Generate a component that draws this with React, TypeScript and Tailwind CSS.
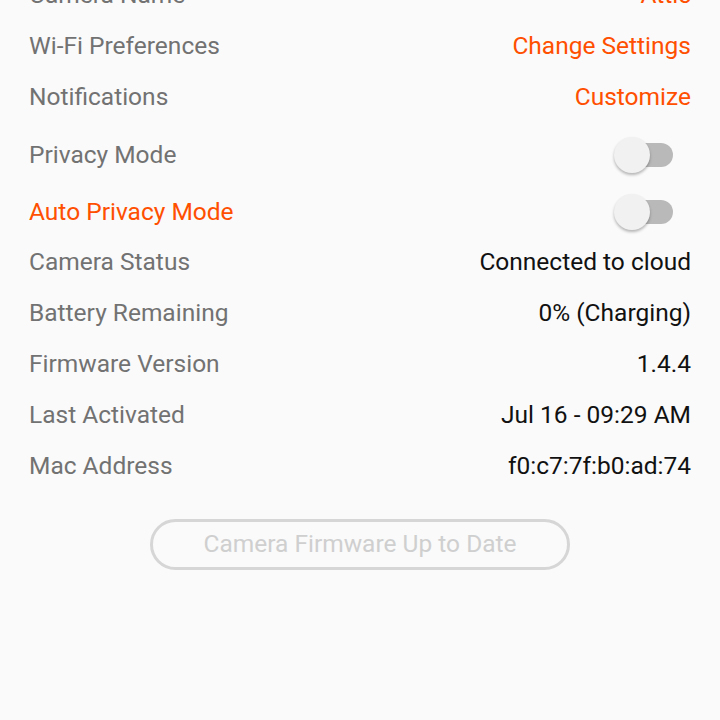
import React from "react";

const Toggle = () => (
  <div className="relative w-[59px] h-[38px] flex items-center">
    <div className="absolute right-0 w-[50px] h-[24px] rounded-full bg-[#b9b9b9]" />
    <div className="absolute left-0 w-[36px] h-[36px] rounded-full bg-[#f1f1f1] shadow-[0_2px_3px_rgba(0,0,0,0.28)]" />
  </div>
);

type Row = { label: string; value?: string; kind: "link" | "text" | "toggle"; labelOrange?: boolean; h: string };

const rows: Row[] = [
  { label: "Camera Name", value: "Attic", kind: "link", h: "h-[51px]" },
  { label: "Wi-Fi Preferences", value: "Change Settings", kind: "link", h: "h-[51px]" },
  { label: "Notifications", value: "Customize", kind: "link", h: "h-[51px]" },
  { label: "Privacy Mode", kind: "toggle", h: "h-[65px]" },
  { label: "Auto Privacy Mode", kind: "toggle", labelOrange: true, h: "h-[49px]" },
  { label: "Camera Status", value: "Connected to cloud", kind: "text", h: "h-[51px]" },
  { label: "Battery Remaining", value: "0% (Charging)", kind: "text", h: "h-[51px]" },
  { label: "Firmware Version", value: "1.4.4", kind: "text", h: "h-[51px]" },
  { label: "Last Activated", value: "Jul 16 - 09:29 AM", kind: "text", h: "h-[51px]" },
  { label: "Mac Address", value: "f0:c7:7f:b0:ad:74", kind: "text", h: "h-[51px]" },
];

export default function App() {
  return (
    <div
      className="w-[720px] h-[720px] overflow-hidden bg-[#fafafa]"
      style={{ fontFamily: "Roboto, 'Noto Sans', sans-serif" }}
    >
      <div className="-mt-[30px] flex flex-col">
        {rows.map((r) => (
          <div key={r.label} className={`${r.h} flex items-center justify-between pl-[29px] pr-[29px] text-[24.5px]`}>
            <span className={r.labelOrange ? "text-[#ff4f00]" : "text-[#727272]"}>{r.label}</span>
            {r.kind === "toggle" ? (
              <div className="mr-[18px] mb-[2px]">
                <Toggle />
              </div>
            ) : (
              <span className={r.kind === "link" ? "text-[#ff4f00]" : "text-[#111111]"}>{r.value}</span>
            )}
          </div>
        ))}
      </div>
      <div className="mt-[27px] flex justify-center">
        <div className="w-[420px] h-[51px] rounded-full border-[3px] border-[#d6d6d6] flex items-center justify-center text-[24.5px] text-[#cfcfcf]">
          Camera Firmware Up to Date
        </div>
      </div>
    </div>
  );
}
